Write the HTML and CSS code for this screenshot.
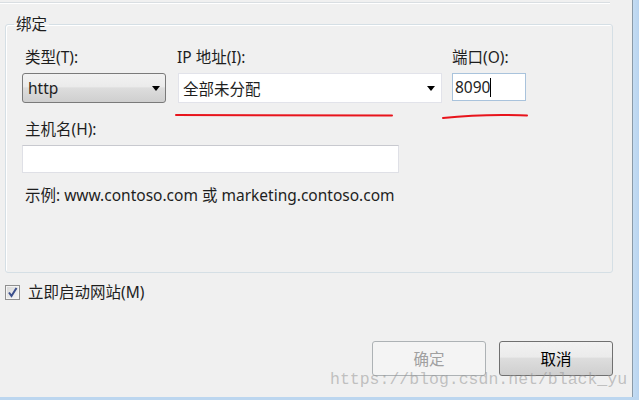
FILE: index.html
```html
<!DOCTYPE html>
<html lang="zh-CN">
<head>
<meta charset="utf-8">
<title>绑定</title>
<link rel="stylesheet" href="styles.css">
</head>
<body>
<div class="window">
  <div class="main">
    <div class="prev-group"></div>
    <fieldset class="group">
      <legend class="legend">绑定</legend>
      <div class="row1">
        <div class="field">
          <label class="lbl">类型(T):</label>
          <div class="select"><span>http</span><span class="arrow"></span></div>
        </div>
        <div class="field">
          <label class="lbl lbl-ip">IP 地址(I):</label>
          <div class="combo"><span>全部未分配</span><span class="arrow"></span></div>
        </div>
        <div class="field">
          <label class="lbl lbl-port">端口(O):</label>
          <div class="port"><span>8090</span><span class="caret"></span></div>
        </div>
      </div>
      <div class="host">
        <label class="lbl">主机名(H):</label>
        <div class="textbox"></div>
      </div>
      <p class="example">示例: www.contoso.com 或 marketing.contoso.com</p>
    </fieldset>
    <div class="check-row">
      <span class="checkbox"><svg width="11" height="11" viewBox="0 0 11 11"><path d="M2 5.5 L4.5 9 L9.5 1" fill="none" stroke="#3b4f8c" stroke-width="2"/></svg></span>
      <span class="check-label">立即启动网站(M)</span>
    </div>
    <div class="buttons">
      <button class="btn disabled">确定</button>
      <button class="btn">取消</button>
    </div>
    <svg class="mark mark-ip" width="220" height="6" viewBox="0 0 220 6"><path d="M1 3 L217 3.5" stroke="#e8141c" stroke-width="2" fill="none" stroke-linecap="round"/></svg>
    <svg class="mark mark-port" width="90" height="8" viewBox="0 0 90 8"><path d="M1 6 C 20 4, 40 3, 60 3 S 80 3, 85 3.5" stroke="#e8141c" stroke-width="2" fill="none" stroke-linecap="round"/></svg>
    <div class="watermark">https://blog.csdn.net/black_yu</div>
  </div>
  <div class="frame"></div>
</div>
<div class="frame-bottom"></div>
</body>
</html>
```

FILE: styles.css
```css
html, body {
  margin: 0;
  padding: 0;
}
body {
  width: 639px;
  height: 400px;
  overflow: hidden;
  background: #f0f0f0;
  font-family: "Noto Sans", "Noto Sans CJK SC", sans-serif;
  font-size: 15.5px;
  color: #1e1e1e;
}
.window {
  display: flex;
  height: 397px;
}
.main {
  position: relative;
  width: 632px;
  display: flex;
  flex-direction: column;
}
.frame {
  width: 7px;
  border-left: 1px solid #8a9aa8;
  box-sizing: border-box;
  background: linear-gradient(90deg, #c4dcf3, #b9d4ef);
}
.frame-bottom {
  height: 3px;
  background: #bcd6ef;
}
.prev-group {
  height: 2px;
  margin-right: 22px;
  border-bottom: 1px solid #d9dee2;
  box-shadow: 0 1px 0 #ffffff;
}
.group {
  margin: 11px 19px 0 5px;
  padding: 0 0 0 16px;
  height: 259px;
  box-sizing: border-box;
  border: 1px solid #d5dfe5;
  border-radius: 3px;
  box-shadow: inset 1px 1px 0 #ffffff;
  min-width: 0;
}
.legend {
  margin-left: -8px;
  padding: 0 2px;
  line-height: 20px;
}
.row1 {
  display: grid;
  grid-template-columns: 144px 264px 72px;
  column-gap: 12px;
  margin-top: 13px;
}
.row1 .field:nth-child(3) {
  margin-left: -2px;
}
.lbl {
  display: block;
  line-height: 20px;
  padding-left: 3px;
  margin-bottom: 6px;
}
.lbl-ip {
  padding-left: 0;
  margin-left: -1px;
}
.lbl-port {
  padding-left: 0;
}
.select {
  height: 30px;
  box-sizing: border-box;
  border: 1px solid #7a7a7a;
  border-radius: 3px;
  background: linear-gradient(#f2f2f2, #ebebeb 45%, #dddddd 50%, #cfcfcf);
  display: flex;
  align-items: center;
  justify-content: space-between;
  padding: 0 5px 0 5px;
}
.arrow {
  width: 0;
  height: 0;
  border-left: 4.5px solid transparent;
  border-right: 4.5px solid transparent;
  border-top: 5px solid #000;
}
.combo {
  height: 30px;
  box-sizing: border-box;
  border: 1px solid #e2e3ea;
  background: #fff;
  display: flex;
  align-items: center;
  justify-content: space-between;
  padding: 0 6px 0 4px;
}
.port {
  height: 28px;
  box-sizing: border-box;
  border: 1px solid #a9c3dc;
  background: #fff;
  display: flex;
  align-items: center;
  padding: 0 2px;
}
.caret {
  width: 1px;
  height: 19px;
  background: #000;
  margin-left: 0;
}
.host {
  margin-top: 16px;
  width: 377px;
}
.host .lbl {
  margin-bottom: 6px;
}
.textbox {
  height: 28px;
  box-sizing: border-box;
  border: 1px solid #dfe0e6;
  border-top-color: #c8c9cf;
  background: #fff;
}
.example {
  margin: 12px 0 0 3px;
  line-height: 20px;
}
.check-row {
  display: flex;
  align-items: center;
  margin: 9px 0 0 5px;
  gap: 8px;
}
.checkbox {
  width: 15px;
  height: 15px;
  box-sizing: border-box;
  border: 1px solid #8f8f8f;
  background: linear-gradient(135deg, #d7d7d7, #f6f6f6);
  display: flex;
  align-items: center;
  justify-content: center;
  box-shadow: inset 0 0 0 1px #f4f4f4;
}
.check-label {
  line-height: 20px;
}
.buttons {
  display: flex;
  justify-content: flex-end;
  gap: 13px;
  margin: 39px 19px 0 0;
}
.btn {
  width: 114px;
  height: 35px;
  box-sizing: border-box;
  border: 1px solid #707070;
  border-radius: 3px;
  font: inherit;
  color: #000;
  background: linear-gradient(#f2f2f2, #ebebeb 45%, #dddddd 50%, #cfcfcf);
  padding: 0;
}
.btn.disabled {
  border-color: #adb2b5;
  background: #f4f4f4;
  color: #a0a0a0;
}
.mark {
  position: absolute;
}
.mark-ip {
  left: 175px;
  top: 112px;
}
.mark-port {
  left: 442px;
  top: 112px;
}
.watermark {
  position: absolute;
  left: 330px;
  top: 370px;
  font-family: "Liberation Mono", monospace;
  font-size: 16.5px;
  color: rgba(150, 150, 150, 0.55);
  white-space: nowrap;
}
```
